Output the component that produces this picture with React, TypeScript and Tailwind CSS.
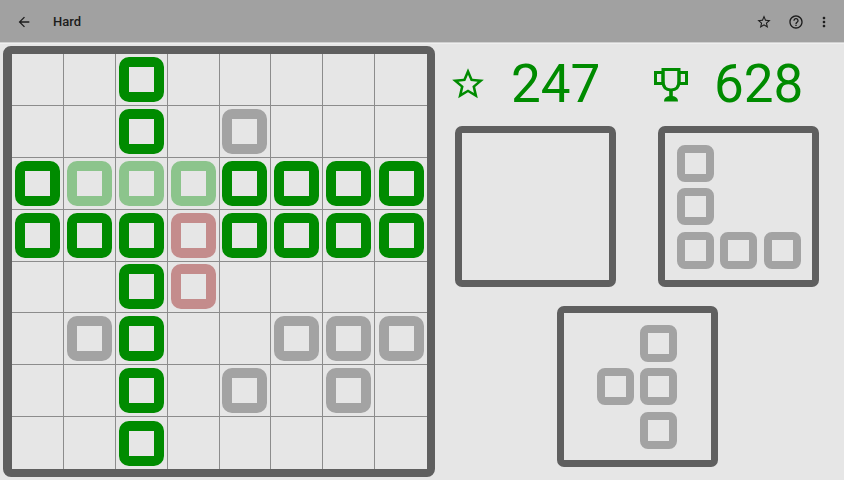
import React from 'react';

const BOARD = [
  '..G.....',
  '..G.g...',
  'GLLLGGGG',
  'GGGRGGGG',
  '..GR....',
  '.gG..ggg',
  '..G.g.g.',
  '..G.....',
];

const SHAPE_B = ['x..', 'x..', 'xxx'];
const SHAPE_C = ['.x', 'xx', '.x'];

function Icon({ d, className }: { d: string; className: string }) {
  return (
    <svg viewBox="0 0 24 24" className={className} fill="currentColor">
      <path d={d} />
    </svg>
  );
}

const STAR = 'M22 9.24l-7.19-.62L12 2 9.19 8.63 2 9.24l5.46 4.73L5.82 21 12 17.27 18.18 21l-1.63-7.03L22 9.24zM12 15.4l-3.76 2.27 1-4.28-3.32-2.88 4.38-.38L12 6.1l1.71 4.04 4.38.38-3.32 2.88 1 4.28L12 15.4z';
const HELP = 'M11 18h2v-2h-2v2zm1-16C6.48 2 2 6.48 2 12s4.48 10 10 10 10-4.48 10-10S17.52 2 12 2zm0 18c-4.41 0-8-3.59-8-8s3.59-8 8-8 8 3.59 8 8-3.59 8-8 8zm0-14c-2.21 0-4 1.79-4 4h2c0-1.1.9-2 2-2s2 .9 2 2c0 2-3 1.75-3 5h2c0-2.25 3-2.5 3-5 0-2.21-1.79-4-4-4z';
const MORE = 'M12 8c1.1 0 2-.9 2-2s-.9-2-2-2-2 .9-2 2 .9 2 2 2zm0 2c-1.1 0-2 .9-2 2s.9 2 2 2 2-.9 2-2-.9-2-2-2zm0 6c-1.1 0-2 .9-2 2s.9 2 2 2 2-.9 2-2-.9-2-2-2z';
const BACK = 'M20 11H7.83l5.59-5.59L12 4l-8 8 8 8 1.41-1.41L7.83 13H20v-2z';

function Trophy() {
  return (
    <svg viewBox="0 0 34 34" className="w-[34px] h-[34px]">
      <g fill="none" stroke="currentColor" strokeWidth="3">
        <rect x="1.5" y="4.5" width="7.5" height="11" />
        <rect x="25" y="4.5" width="7.5" height="11" />
        <path d="M9 1.5H25V13Q25 22 17 22Q9 22 9 13Z" />
      </g>
      <rect x="15.2" y="22" width="3.6" height="7" fill="currentColor" />
      <path d="M10 33.5Q10 28 17 28Q24 28 24 33.5Z" fill="currentColor" />
    </svg>
  );
}

function BoardCell({ value, col, row }: { value: string; col: number; row: number }) {
  const color =
    value === 'G' ? 'border-[#008b00]'
    : value === 'L' ? 'border-[#8cc48c]'
    : value === 'R' ? 'border-[#c48c8c]'
    : value === 'g' ? 'border-[#a3a3a3]'
    : '';
  return (
    <div
      className={`flex items-center justify-center border-[#8c8c8c] ${col < 7 ? 'border-r' : ''} ${row < 7 ? 'border-b' : ''}`}
    >
      {value !== '.' && <div className={`w-[45px] h-[45px] rounded-[10px] border-[10px] ${color}`} />}
    </div>
  );
}

function PieceBox({ shape }: { shape?: string[] }) {
  const cols = shape ? shape[0].length : 0;
  return (
    <div className="w-[161px] h-[161px] rounded-[7px] border-[7px] border-[#5f5f5f] flex items-center justify-center">
      {shape && (
        <div className={`grid gap-[6.5px] ${cols === 3 ? 'grid-cols-3' : 'grid-cols-2'}`}>
          {shape.join('').split('').map((c, i) =>
            c === 'x' ? (
              <div key={i} className="w-[37px] h-[37px] rounded-[8px] border-[8px] border-[#a3a3a3]" />
            ) : (
              <div key={i} className="w-[37px] h-[37px]" />
            )
          )}
        </div>
      )}
    </div>
  );
}

export default function App() {
  return (
    <div className="w-[844px] h-[480px] overflow-hidden flex flex-col bg-[#e6e6e6] font-['Roboto',sans-serif]">
      <div className="h-[42px] shrink-0 bg-[#a1a1a1] flex items-center pt-[1px] text-[#1c1c1c] shadow-[0_1px_0_#d0d0d0,0_2px_0_#efefef]">
        <Icon d={BACK} className="w-[16px] h-[16px] ml-[16px]" />
        <span className="ml-[21px] text-[13px] font-medium">Hard</span>
        <div className="ml-auto flex items-center">
          <Icon d={STAR} className="w-[16px] h-[16px]" />
          <Icon d={HELP} className="w-[16px] h-[16px] ml-[16px]" />
          <Icon d={MORE} className="w-[16px] h-[16px] ml-[12px] mr-[12px]" />
        </div>
      </div>

      <div className="flex pt-[4px] pl-[3px]">
        <div className="w-[432px] h-[431px] shrink-0 rounded-[8px] border-[8px] border-l-[9px] border-[#5f5f5f] grid grid-cols-8 grid-rows-8">
          {BOARD.map((line, r) =>
            line.split('').map((v, c) => <BoardCell key={`${r}-${c}`} value={v} col={c} row={r} />)
          )}
        </div>

        <div className="ml-[20px] w-[364px] flex flex-col text-[#008b00]">
          <div className="h-[80px] flex items-center -ml-[6px]">
            <Icon d={STAR} className="w-[38px] h-[38px] -mt-[4px]" />
            <span className="ml-[24px] -mt-[4px] w-[88px] text-[53px] leading-none">247</span>
            <div className="ml-[55px] -mt-[2px]">
              <Trophy />
            </div>
            <span className="ml-[26px] -mt-[4px] w-[88px] text-[53px] leading-none">628</span>
          </div>
          <div className="flex justify-between">
            <PieceBox />
            <PieceBox shape={SHAPE_B} />
          </div>
          <div className="flex justify-center mt-[19px]">
            <PieceBox shape={SHAPE_C} />
          </div>
        </div>
      </div>
    </div>
  );
}
